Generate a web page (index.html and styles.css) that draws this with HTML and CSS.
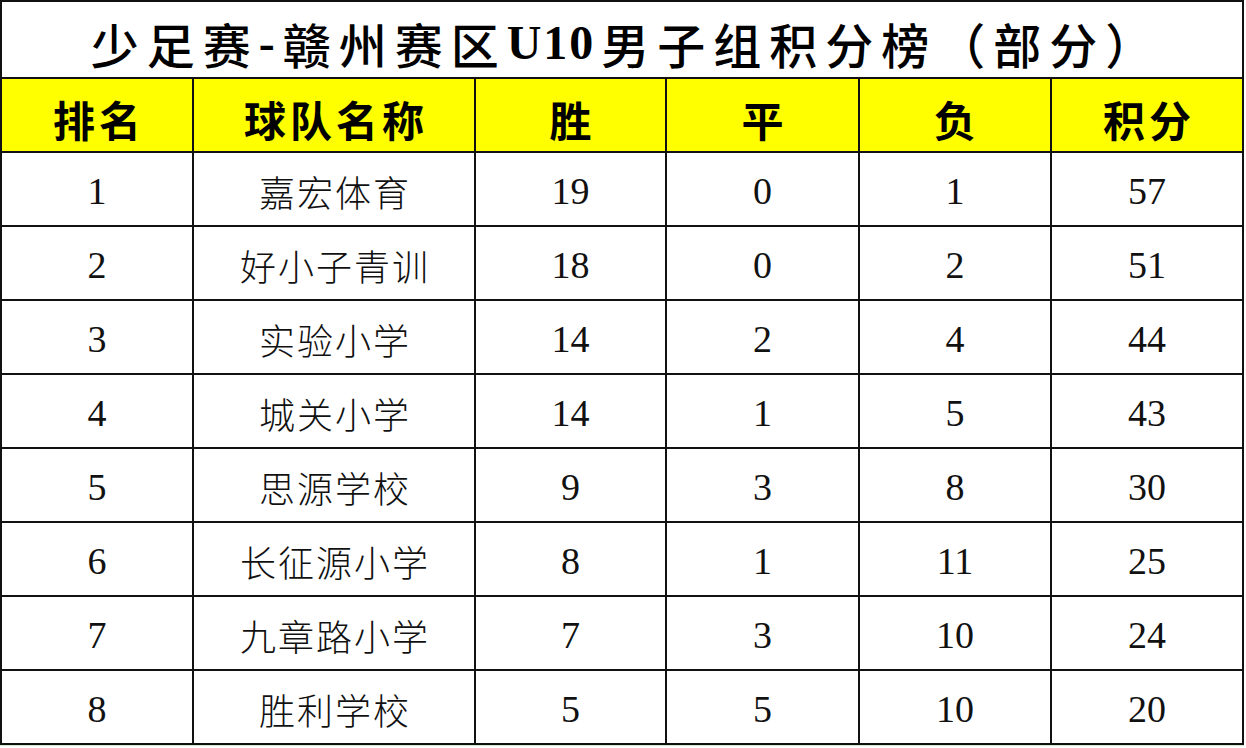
FILE: index.html
```html
<!DOCTYPE html>
<html lang="zh-CN">
<head>
<meta charset="utf-8">
<title>少足赛-赣州赛区U10男子组积分榜（部分）</title>
<link rel="stylesheet" href="styles.css">
</head>
<body>
<div class="board">
  <div class="title">少足赛<span class="latin">-</span>赣州赛区<span class="latin">U10</span>男子组积分榜（部分）</div>

  <div class="cell head">排名</div>
  <div class="cell head">球队名称</div>
  <div class="cell head">胜</div>
  <div class="cell head">平</div>
  <div class="cell head">负</div>
  <div class="cell head">积分</div>

  <div class="cell num">1</div><div class="cell team">嘉宏体育</div><div class="cell num">19</div><div class="cell num">0</div><div class="cell num">1</div><div class="cell num">57</div>
  <div class="cell num">2</div><div class="cell team">好小子青训</div><div class="cell num">18</div><div class="cell num">0</div><div class="cell num">2</div><div class="cell num">51</div>
  <div class="cell num">3</div><div class="cell team">实验小学</div><div class="cell num">14</div><div class="cell num">2</div><div class="cell num">4</div><div class="cell num">44</div>
  <div class="cell num">4</div><div class="cell team">城关小学</div><div class="cell num">14</div><div class="cell num">1</div><div class="cell num">5</div><div class="cell num">43</div>
  <div class="cell num">5</div><div class="cell team">思源学校</div><div class="cell num">9</div><div class="cell num">3</div><div class="cell num">8</div><div class="cell num">30</div>
  <div class="cell num">6</div><div class="cell team">长征源小学</div><div class="cell num">8</div><div class="cell num">1</div><div class="cell num">11</div><div class="cell num">25</div>
  <div class="cell num">7</div><div class="cell team">九章路小学</div><div class="cell num">7</div><div class="cell num">3</div><div class="cell num">10</div><div class="cell num">24</div>
  <div class="cell num">8</div><div class="cell team">胜利学校</div><div class="cell num">5</div><div class="cell num">5</div><div class="cell num">10</div><div class="cell num">20</div>
</div>
</body>
</html>
```

FILE: styles.css
```css
html, body {
  margin: 0;
  padding: 0;
  background: #ffffff;
}

body {
  width: 1246px;
  height: 748px;
  overflow: hidden;
}

.board {
  width: 1244px;
  box-sizing: border-box;
  display: grid;
  grid-template-columns: 190px 280px 189px 191px 190px 190px;
  grid-template-rows: 75px 72px repeat(8, 72px);
  gap: 2px;
  padding: 2px;
  background: #111111;
  border-bottom: 1px solid #cfe8c8;
}

.title {
  grid-column: 1 / -1;
  background: #ffffff;
  display: flex;
  align-items: center;
  justify-content: center;
  padding-top: 6px;
  padding-left: 8px;
  font-family: "Noto Sans CJK SC", sans-serif;
  font-weight: 500;
  font-size: 48px;
  letter-spacing: 8px;
  color: #000000;
}

.title .latin {
  font-family: "Liberation Serif", serif;
  font-weight: 700;
  letter-spacing: 2px;
  margin-right: 6px;
}

.cell {
  background: #ffffff;
  display: flex;
  align-items: center;
  justify-content: center;
  color: #111111;
}

.head {
  background: #ffff00;
  font-family: "Noto Sans CJK SC", sans-serif;
  font-weight: 700;
  font-size: 42px;
  letter-spacing: 4px;
  padding-left: 4px;
  padding-top: 6px;
  color: #000000;
}

.team {
  font-family: "Noto Sans CJK SC", sans-serif;
  font-weight: 300;
  font-size: 36px;
  letter-spacing: 2px;
  padding-left: 2px;
  padding-top: 4px;
}

.num {
  font-family: "Liberation Serif", serif;
  font-size: 38px;
  padding-top: 4px;
}
```
